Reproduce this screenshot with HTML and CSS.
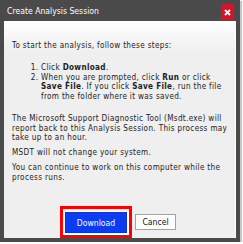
FILE: index.html
```html
<!DOCTYPE html>
<html lang="en">
<head>
  <meta charset="UTF-8">
  <meta name="viewport" content="width=device-width, initial-scale=1.0">
  <title>Create Analysis Session</title>
  <link rel="stylesheet" href="styles.css">
</head>
<body>
  <div class="window">
    <div class="titlebar">
      <span class="title">Create Analysis Session</span>
      <button class="close" aria-label="Close">
        <svg width="7" height="7" viewBox="0 0 7 7"><path d="M1 1L6 6M6 1L1 6" stroke="#fff" stroke-width="1.8" fill="none"/></svg>
      </button>
    </div>
    <div class="content">
      <p class="intro">To start the analysis, follow these steps:</p>
      <ol class="steps">
        <li>Click <b>Download</b>.</li>
        <li>When you are prompted, click <b>Run</b> or click <b>Save File</b>. If you click <b>Save File</b>, run the file from the folder where it was saved.</li>
      </ol>
      <p class="note">The Microsoft Support Diagnostic Tool (Msdt.exe) will report back to this Analysis Session. This process may take up to an hour.</p>
      <p class="note">MSDT will not change your system.</p>
      <p class="note">You can continue to work on this computer while the process runs.</p>
      <div class="actions">
        <span class="highlight"><button class="btn btn-primary">Download</button></span>
        <button class="btn">Cancel</button>
      </div>
    </div>
  </div>
</body>
</html>
```

FILE: styles.css
```css
body {
  margin: 0;
  background: #fff;
  font-family: "DejaVu Sans Condensed", "DejaVu Sans", sans-serif;
  font-stretch: condensed;
}
.window {
  width: 240px;
  height: 242px;
  box-sizing: border-box;
  padding: 0 4px 4px 4px;
  background: #4a4a4a;
  display: flex;
  flex-direction: column;
  box-shadow: 2px 1px 1px rgba(0, 0, 0, 0.22);
}
.titlebar {
  height: 21px;
  flex: none;
  display: flex;
  justify-content: space-between;
  align-items: center;
  padding-left: 3px;
}
.title {
  color: #fff;
  font-size: 8.6px;
}
.close {
  align-self: flex-end;
  width: 13px;
  height: 16px;
  margin: 0 2px 1px 0;
  padding: 0;
  border: 0;
  background: #dc1029;
  display: flex;
  align-items: center;
  justify-content: center;
}
.content {
  flex: 1;
  display: flex;
  flex-direction: column;
  padding: 20px 5px 0 8px;
  border-right: 1px solid #fff;
  background: linear-gradient(#fff, #efefef 30px);
  color: #222;
  font-size: 8.1px;
  line-height: 9.7px;
  letter-spacing: 0.33px;
}
.intro {
  margin: 0;
}
.steps {
  margin: 12.2px 0;
  padding-left: 29px;
}
.note {
  margin: 0 0 5.3px;
}
.actions {
  margin-top: auto;
  display: flex;
  justify-content: center;
  align-items: center;
  gap: 3px;
  padding-right: 6px;
  letter-spacing: 0;
}
.highlight {
  display: flex;
  padding: 3px 2px 2px;
  border: 3px solid #f00;
  background: #fff;
}
.btn {
  width: 41px;
  height: 16px;
  padding: 0;
  border: 1px solid #a3a3a3;
  background: #fff;
  color: #111;
  font-family: inherit;
  font-size: 8.6px;
}
.btn-primary {
  width: 62px;
  height: 21px;
  border-color: #0a36d8;
  background: #0a3cf2;
  color: #fff;
}
```
